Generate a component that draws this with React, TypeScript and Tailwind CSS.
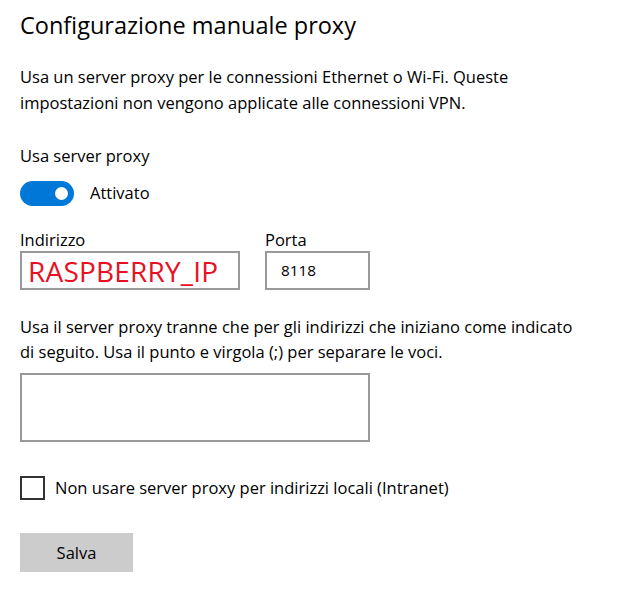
export default function App() {
    return (
        <div
            className="w-[619px] h-[593px] bg-white text-black px-5 pt-[8px]"
            style={{ fontFamily: '"Open Sans", "Noto Sans", sans-serif' }}
        >
            <h1 className="text-[23.5px] leading-[34px] font-normal">Configurazione manuale proxy</h1>

            <p className="mt-[22px] text-[16.5px] leading-[26px]">
                Usa un server proxy per le connessioni Ethernet o Wi-Fi. Queste
                <br />
                impostazioni non vengono applicate alle connessioni VPN.
            </p>

            <div className="mt-[27px] text-[16.5px] leading-[26px]">Usa server proxy</div>

            <div className="mt-[11px] flex items-center gap-[16px]">
                <div className="w-[54px] h-[25px] rounded-full bg-[#0078d7] flex items-center justify-end pr-[6px]">
                    <div className="w-[13px] h-[13px] rounded-full bg-white" />
                </div>
                <span className="text-[16.5px] leading-[26px]">Attivato</span>
            </div>

            <div className="mt-[23px] flex gap-[25px]">
                <div className="flex flex-col">
                    <span className="text-[16.5px] leading-[22px]">Indirizzo</span>
                    <div className="w-[220px] h-[39px] border-2 border-[#999999] flex items-center pl-[6px] overflow-hidden">
                        <span className="text-[#e81123] text-[28px] leading-[32px] tracking-[0.2px]">RASPBERRY_IP</span>
                    </div>
                </div>
                <div className="flex flex-col">
                    <span className="text-[16.5px] leading-[22px]">Porta</span>
                    <div className="w-[105px] h-[39px] border-2 border-[#999999] flex items-center pl-[14px]">
                        <span className="text-[15.3px]">8118</span>
                    </div>
                </div>
            </div>

            <p className="mt-[24px] text-[16.5px] leading-[25px]">
                Usa il server proxy tranne che per gli indirizzi che iniziano come indicato
                <br />
                di seguito. Usa il punto e virgola (;) per separare le voci.
            </p>

            <div className="mt-[9px] w-[350px] h-[69px] border-2 border-[#999999]" />

            <div className="mt-[33px] flex items-center gap-[10px]">
                <div className="w-[25px] h-[24px] border-2 border-[#333333]" />
                <span className="text-[16.5px] leading-[26px]">
                    Non usare server proxy per indirizzi locali (Intranet)
                </span>
            </div>

            <button className="mt-[32px] w-[113px] h-[39px] bg-[#cccccc] text-[16.5px] leading-[22px] block">
                Salva
            </button>
        </div>
    );
}
